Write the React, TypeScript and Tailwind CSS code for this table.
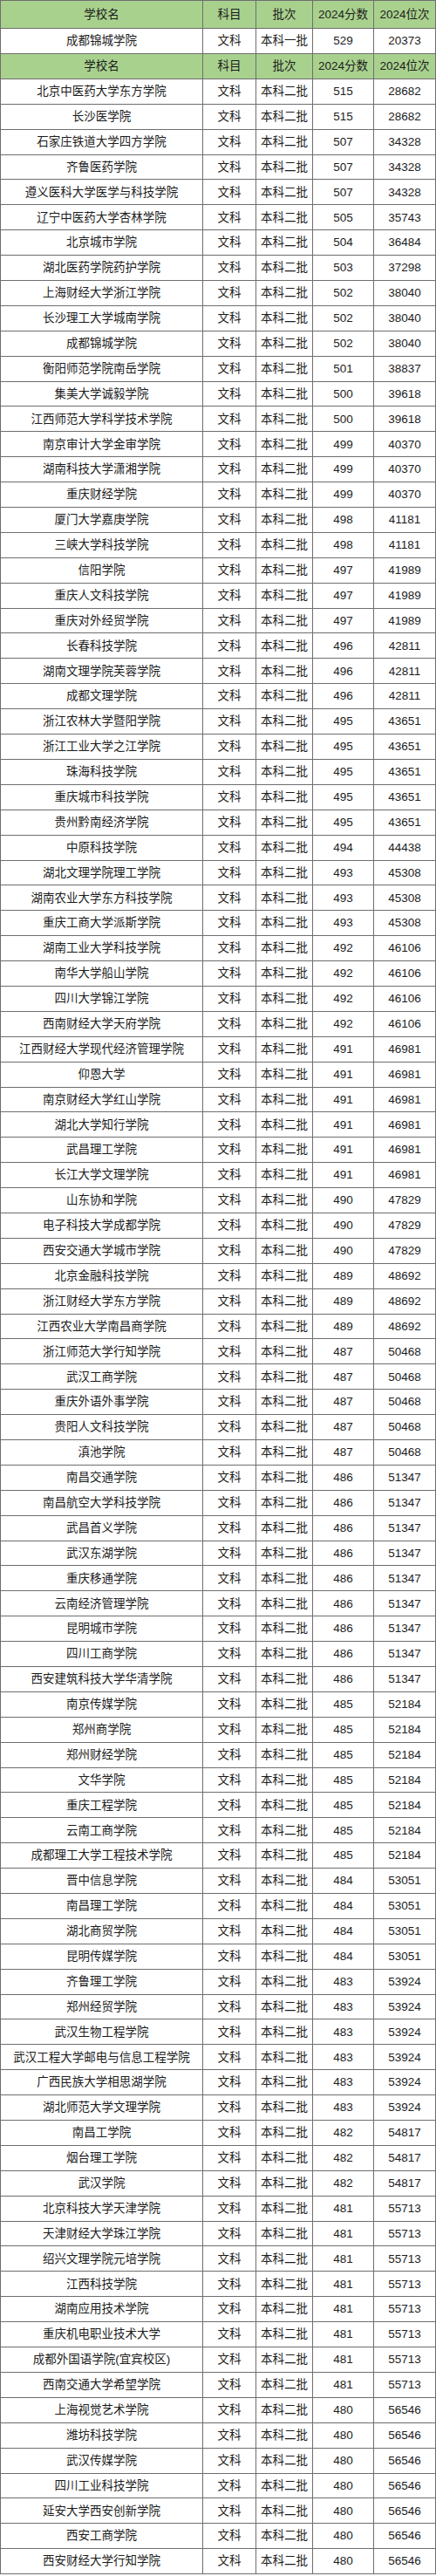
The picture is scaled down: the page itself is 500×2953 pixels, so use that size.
const cols = "grid grid-cols-[233px_61px_65px_70px_71px]";

// [学校名, 分数, 位次] — 文科 / 本科二批
const rows: [string, string, string][] = [
  ["北京中医药大学东方学院", "515", "28682"],
  ["长沙医学院", "515", "28682"],
  ["石家庄铁道大学四方学院", "507", "34328"],
  ["齐鲁医药学院", "507", "34328"],
  ["遵义医科大学医学与科技学院", "507", "34328"],
  ["辽宁中医药大学杏林学院", "505", "35743"],
  ["北京城市学院", "504", "36484"],
  ["湖北医药学院药护学院", "503", "37298"],
  ["上海财经大学浙江学院", "502", "38040"],
  ["长沙理工大学城南学院", "502", "38040"],
  ["成都锦城学院", "502", "38040"],
  ["衡阳师范学院南岳学院", "501", "38837"],
  ["集美大学诚毅学院", "500", "39618"],
  ["江西师范大学科学技术学院", "500", "39618"],
  ["南京审计大学金审学院", "499", "40370"],
  ["湖南科技大学潇湘学院", "499", "40370"],
  ["重庆财经学院", "499", "40370"],
  ["厦门大学嘉庚学院", "498", "41181"],
  ["三峡大学科技学院", "498", "41181"],
  ["信阳学院", "497", "41989"],
  ["重庆人文科技学院", "497", "41989"],
  ["重庆对外经贸学院", "497", "41989"],
  ["长春科技学院", "496", "42811"],
  ["湖南文理学院芙蓉学院", "496", "42811"],
  ["成都文理学院", "496", "42811"],
  ["浙江农林大学暨阳学院", "495", "43651"],
  ["浙江工业大学之江学院", "495", "43651"],
  ["珠海科技学院", "495", "43651"],
  ["重庆城市科技学院", "495", "43651"],
  ["贵州黔南经济学院", "495", "43651"],
  ["中原科技学院", "494", "44438"],
  ["湖北文理学院理工学院", "493", "45308"],
  ["湖南农业大学东方科技学院", "493", "45308"],
  ["重庆工商大学派斯学院", "493", "45308"],
  ["湖南工业大学科技学院", "492", "46106"],
  ["南华大学船山学院", "492", "46106"],
  ["四川大学锦江学院", "492", "46106"],
  ["西南财经大学天府学院", "492", "46106"],
  ["江西财经大学现代经济管理学院", "491", "46981"],
  ["仰恩大学", "491", "46981"],
  ["南京财经大学红山学院", "491", "46981"],
  ["湖北大学知行学院", "491", "46981"],
  ["武昌理工学院", "491", "46981"],
  ["长江大学文理学院", "491", "46981"],
  ["山东协和学院", "490", "47829"],
  ["电子科技大学成都学院", "490", "47829"],
  ["西安交通大学城市学院", "490", "47829"],
  ["北京金融科技学院", "489", "48692"],
  ["浙江财经大学东方学院", "489", "48692"],
  ["江西农业大学南昌商学院", "489", "48692"],
  ["浙江师范大学行知学院", "487", "50468"],
  ["武汉工商学院", "487", "50468"],
  ["重庆外语外事学院", "487", "50468"],
  ["贵阳人文科技学院", "487", "50468"],
  ["滇池学院", "487", "50468"],
  ["南昌交通学院", "486", "51347"],
  ["南昌航空大学科技学院", "486", "51347"],
  ["武昌首义学院", "486", "51347"],
  ["武汉东湖学院", "486", "51347"],
  ["重庆移通学院", "486", "51347"],
  ["云南经济管理学院", "486", "51347"],
  ["昆明城市学院", "486", "51347"],
  ["四川工商学院", "486", "51347"],
  ["西安建筑科技大学华清学院", "486", "51347"],
  ["南京传媒学院", "485", "52184"],
  ["郑州商学院", "485", "52184"],
  ["郑州财经学院", "485", "52184"],
  ["文华学院", "485", "52184"],
  ["重庆工程学院", "485", "52184"],
  ["云南工商学院", "485", "52184"],
  ["成都理工大学工程技术学院", "485", "52184"],
  ["晋中信息学院", "484", "53051"],
  ["南昌理工学院", "484", "53051"],
  ["湖北商贸学院", "484", "53051"],
  ["昆明传媒学院", "484", "53051"],
  ["齐鲁理工学院", "483", "53924"],
  ["郑州经贸学院", "483", "53924"],
  ["武汉生物工程学院", "483", "53924"],
  ["武汉工程大学邮电与信息工程学院", "483", "53924"],
  ["广西民族大学相思湖学院", "483", "53924"],
  ["湖北师范大学文理学院", "483", "53924"],
  ["南昌工学院", "482", "54817"],
  ["烟台理工学院", "482", "54817"],
  ["武汉学院", "482", "54817"],
  ["北京科技大学天津学院", "481", "55713"],
  ["天津财经大学珠江学院", "481", "55713"],
  ["绍兴文理学院元培学院", "481", "55713"],
  ["江西科技学院", "481", "55713"],
  ["湖南应用技术学院", "481", "55713"],
  ["重庆机电职业技术大学", "481", "55713"],
  ["成都外国语学院(宜宾校区)", "481", "55713"],
  ["西南交通大学希望学院", "481", "55713"],
  ["上海视觉艺术学院", "480", "56546"],
  ["潍坊科技学院", "480", "56546"],
  ["武汉传媒学院", "480", "56546"],
  ["四川工业科技学院", "480", "56546"],
  ["延安大学西安创新学院", "480", "56546"],
  ["西安工商学院", "480", "56546"],
  ["西安财经大学行知学院", "480", "56546"],
];

function Cell({ children, first }: { children: React.ReactNode; first?: boolean }) {
  return (
    <div
      className={`flex items-center justify-center whitespace-nowrap border-r border-b border-[#6e6e6e] ${
        first ? "border-l" : ""
      }`}
    >
      {children}
    </div>
  );
}

function HeaderRow({ tall }: { tall?: boolean }) {
  return (
    <div className={`${cols} bg-[#a9d18e] ${tall ? "h-[33px] border-t border-[#6e6e6e]" : "h-[29px]"}`}>
      <Cell first>学校名</Cell>
      <Cell>科目</Cell>
      <Cell>批次</Cell>
      <Cell>2024分数</Cell>
      <Cell>2024位次</Cell>
    </div>
  );
}

function DataRow({ name, batch, score, rank }: { name: string; batch: string; score: string; rank: string }) {
  return (
    <div className={`${cols} h-[28.9px] bg-white`}>
      <Cell first>{name}</Cell>
      <Cell>文科</Cell>
      <Cell>{batch}</Cell>
      <Cell>{score}</Cell>
      <Cell>{rank}</Cell>
    </div>
  );
}

export default function App() {
  return (
    <div className="w-[500px] bg-white text-[13.5px] leading-none text-[#1c1c1c] font-['Liberation_Sans','Noto_Sans_CJK_SC',sans-serif]">
      <HeaderRow tall />
      <DataRow name="成都锦城学院" batch="本科一批" score="529" rank="20373" />
      <HeaderRow />
      {rows.map(([name, score, rank]) => (
        <DataRow key={name} name={name} batch="本科二批" score={score} rank={rank} />
      ))}
    </div>
  );
}
